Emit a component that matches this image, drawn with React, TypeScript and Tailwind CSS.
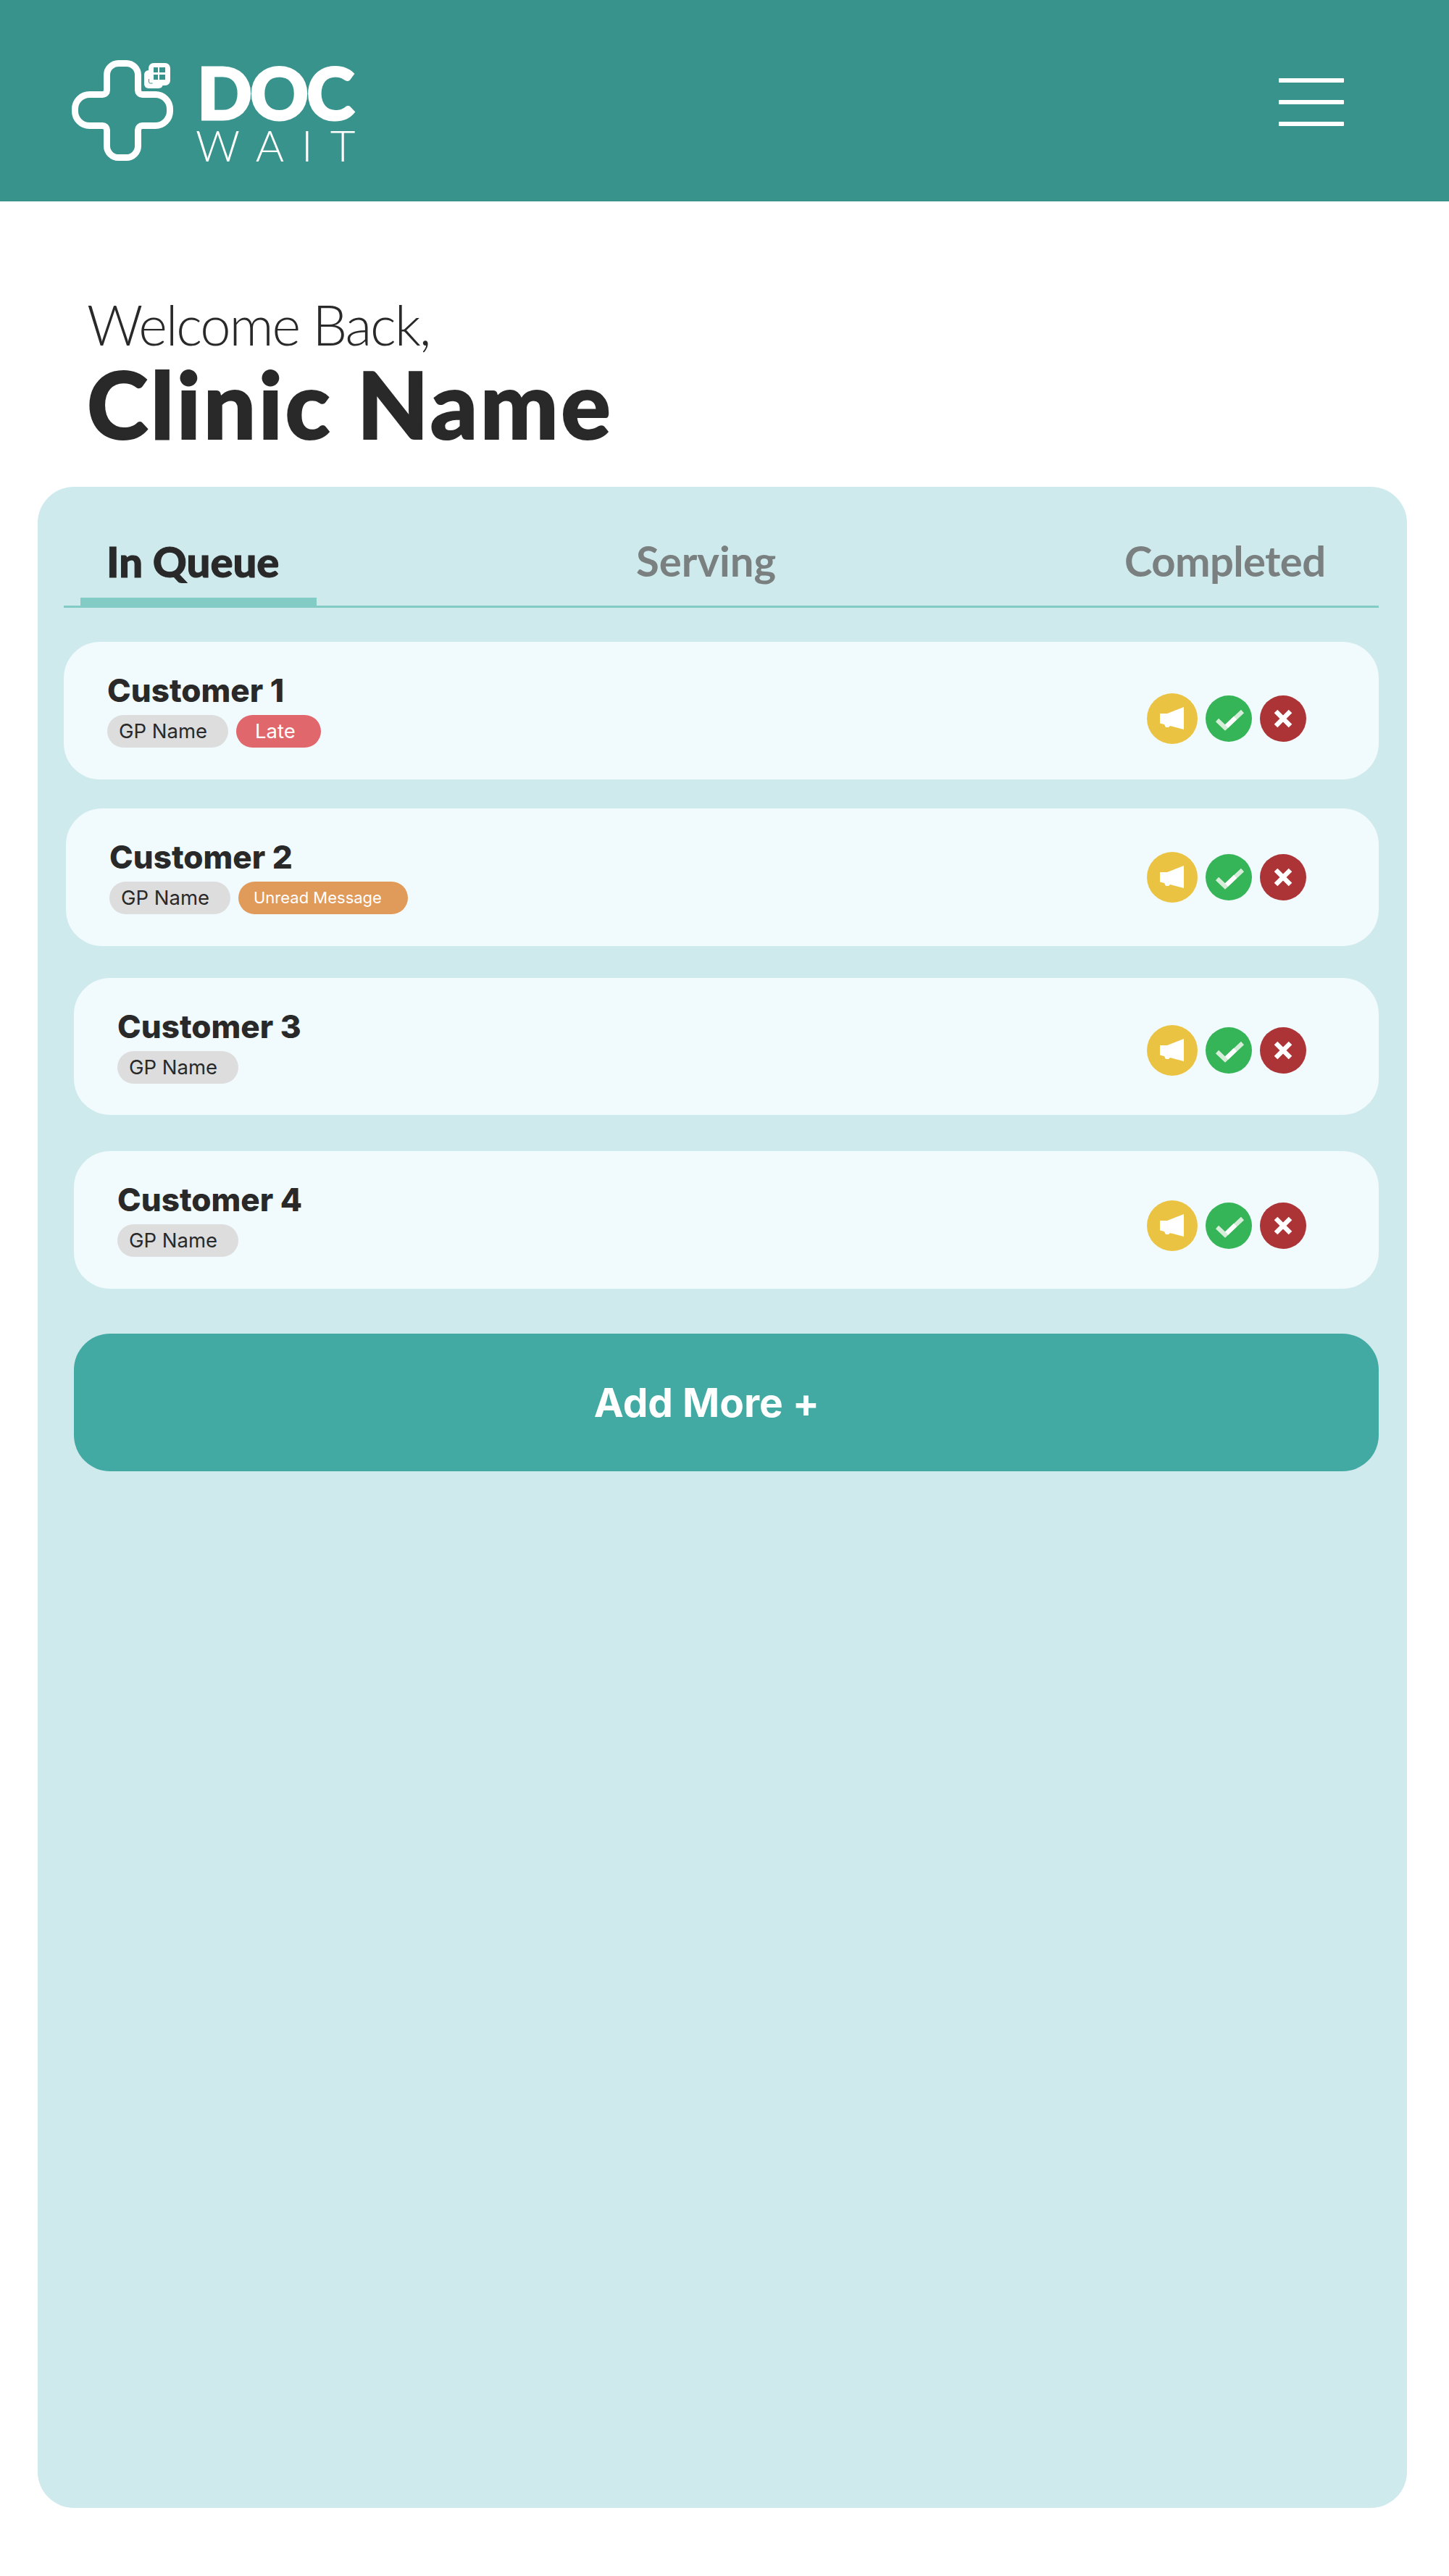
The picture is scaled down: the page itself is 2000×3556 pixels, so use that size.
const customers = [
  { name: "Customer 1", card: "mt-[47px] h-[190px]", icons: "pt-[71px]", tag: "late" },
  { name: "Customer 2", card: "mt-[40px] ml-[3px] h-[190px]", icons: "pt-[60px]", tag: "unread" },
  { name: "Customer 3", card: "mt-[44px] ml-[14px] h-[189px]", icons: "pt-[65px]", tag: "" },
  { name: "Customer 4", card: "mt-[50px] ml-[14px] h-[190px]", icons: "pt-[68px]", tag: "" },
];

function Logo() {
  return (
    <svg width="140" height="140" viewBox="0 0 140 140" className="shrink-0">
      <path
        d="M64.5 4.5H75.5A16 16 0 0 1 91.5 20.5V41.5A6 6 0 0 0 97.5 47.5H115.5A20 20 0 0 1 135.5 67.5V70.5A20 20 0 0 1 115.5 90.5H97.5A6 6 0 0 0 91.5 96.5V118.5A16 16 0 0 1 75.5 134.5H64.5A16 16 0 0 1 48.5 118.5V96.5A6 6 0 0 0 42.5 90.5H24.5A20 20 0 0 1 4.5 70.5V67.5A20 20 0 0 1 24.5 47.5H42.5A6 6 0 0 0 48.5 41.5V20.5A16 16 0 0 1 64.5 4.5Z"
        fill="none"
        stroke="#fff"
        strokeWidth="9"
      />
      <rect x="100" y="14" width="26" height="25" rx="6" fill="#fff" />
      <rect x="106" y="4" width="30" height="31" rx="7" fill="#fff" />
      <path d="M113 10h6v7h-6zM121 10h8v7h-8zM113 20h6v7h-6zM121 20h8v7h-8z" fill="#38938c" />
      <path d="M106.5 26v4q0 2 2 2h3" fill="none" stroke="#38938c" strokeWidth="1" />
    </svg>
  );
}

function Megaphone() {
  return (
    <div className="flex h-[70px] w-[70px] items-center justify-center rounded-full bg-[#ebc343]">
      <svg width="70" height="70" viewBox="-35 -35 70 70">
        <path d="M-17-7H-7L16-16V15L-3 10-5 12H-9L-11 8-17 6.500Z" fill="#fff" />
      </svg>
    </div>
  );
}

function Check() {
  return (
    <div className="mt-[3px] h-[64px] w-[64px] rounded-full bg-[#35b558]">
      <svg width="64" height="64" viewBox="-32 -32 64 64">
        <path d="M-16 2L-5 12.500 19-10" fill="none" stroke="#d6eed9" strokeWidth="6" />
        <path d="M-3 10.500L9-1" fill="none" stroke="#fff" strokeWidth="6" />
      </svg>
    </div>
  );
}

function Cross() {
  return (
    <div className="mt-[3px] h-[64px] w-[64px] rounded-full bg-[#ad3436]">
      <svg width="64" height="64" viewBox="-32 -32 64 64">
        <path d="M-10-10L10 10M10-10L-10 10" fill="none" stroke="#fff" strokeWidth="6.500" />
      </svg>
    </div>
  );
}

function Row({ name, card, icons, tag }: (typeof customers)[number]) {
  return (
    <div className={`flex justify-between rounded-[50px] bg-[#f1fafc] pl-[60px] pr-[100px] ${card}`}>
      <div className="pt-[45px]">
        <div className="h-[44px] text-[44px] font-extrabold leading-[44px] text-[#292929]">{name}</div>
        <div className="mt-[12px] flex gap-[11px]">
          <span className="flex h-[45px] w-[167px] items-center rounded-full bg-[#dddddd] pl-[16px] text-[27.500px] text-[#292929]">
            GP Name
          </span>
          {tag === "late" && (
            <span className="flex h-[45px] w-[117px] items-center rounded-full bg-[#e0676b] pl-[26px] text-[27.500px] text-white">
              Late
            </span>
          )}
          {tag === "unread" && (
            <span className="flex h-[45px] w-[234px] items-center rounded-full bg-[#e09a5a] pl-[21px] text-[22px] text-white">
              Unread Message
            </span>
          )}
        </div>
      </div>
      <div className={`flex items-start gap-[11px] ${icons}`}>
        <Megaphone />
        <Check />
        <Cross />
      </div>
    </div>
  );
}

export default function App() {
  return (
    <div className="h-[3556px] w-[2000px] overflow-hidden bg-white font-['Inter',sans-serif]">
      <header className="flex h-[278px] items-start justify-between bg-[#38938c] pl-[99px] pr-[145px]">
        <div className="flex pt-[83px]">
          <Logo />
          <div className="ml-[31px] w-[226px] font-['Lato',sans-serif] text-white">
            <div className="h-[86px] pl-[2px] text-[100px] font-black leading-[86px] tracking-[-3px] [-webkit-text-stroke:3px_#fff]">DOC</div>
            <div className="mt-[6px] text-[60px] font-light leading-[50px] tracking-[24px]">WAIT</div>
          </div>
        </div>
        <div className="flex w-[90px] flex-col gap-[24px] pt-[108px]">
          <div className="h-[6px] rounded-[1px] bg-white" />
          <div className="h-[6px] rounded-[1px] bg-white" />
          <div className="h-[6px] rounded-[1px] bg-white" />
        </div>
      </header>

      <section className="h-[394px] pl-[120px] pt-[125px] font-['Lato',sans-serif] text-[#292929]">
        <div className="h-[90px] text-[76px] font-light leading-[90px] tracking-[-2.2px]">Welcome Back,</div>
        <div className="text-[128px] font-black leading-[128px] tracking-[3.5px] [-webkit-text-stroke:2px_#292929]">Clinic Name</div>
      </section>

      <main className="ml-[52px] flex h-[2790px] w-[1890px] flex-col rounded-[50px] bg-[#cfeaed] pl-[36px] pr-[39px]">
        <div className="flex h-[167px] items-end border-b-[3px] border-[#83cbc5] font-['Lato',sans-serif] text-[58px] font-bold leading-[70px] text-[#7a8080]">
          <div className="-mb-[3px] ml-[23px] h-[99px] w-[326px] border-b-[14px] border-[#83cbc5] pl-[36px] font-black text-[#292929] [-webkit-text-stroke:1px_#292929]">
            In Queue
          </div>
          <div className="mb-[27px] ml-[441px] h-[70px]">Serving</div>
          <div className="mb-[27px] ml-[481px] h-[70px] tracking-[-0.6px]">Completed</div>
        </div>

        {customers.map((c) => (
          <Row key={c.name} {...c} />
        ))}

        <button className="ml-[14px] mt-[62px] flex h-[190px] items-center justify-center rounded-[50px] bg-[#42aaa3] pr-[54px] text-[55px] font-bold text-white">
          Add More +
        </button>
      </main>
    </div>
  );
}
